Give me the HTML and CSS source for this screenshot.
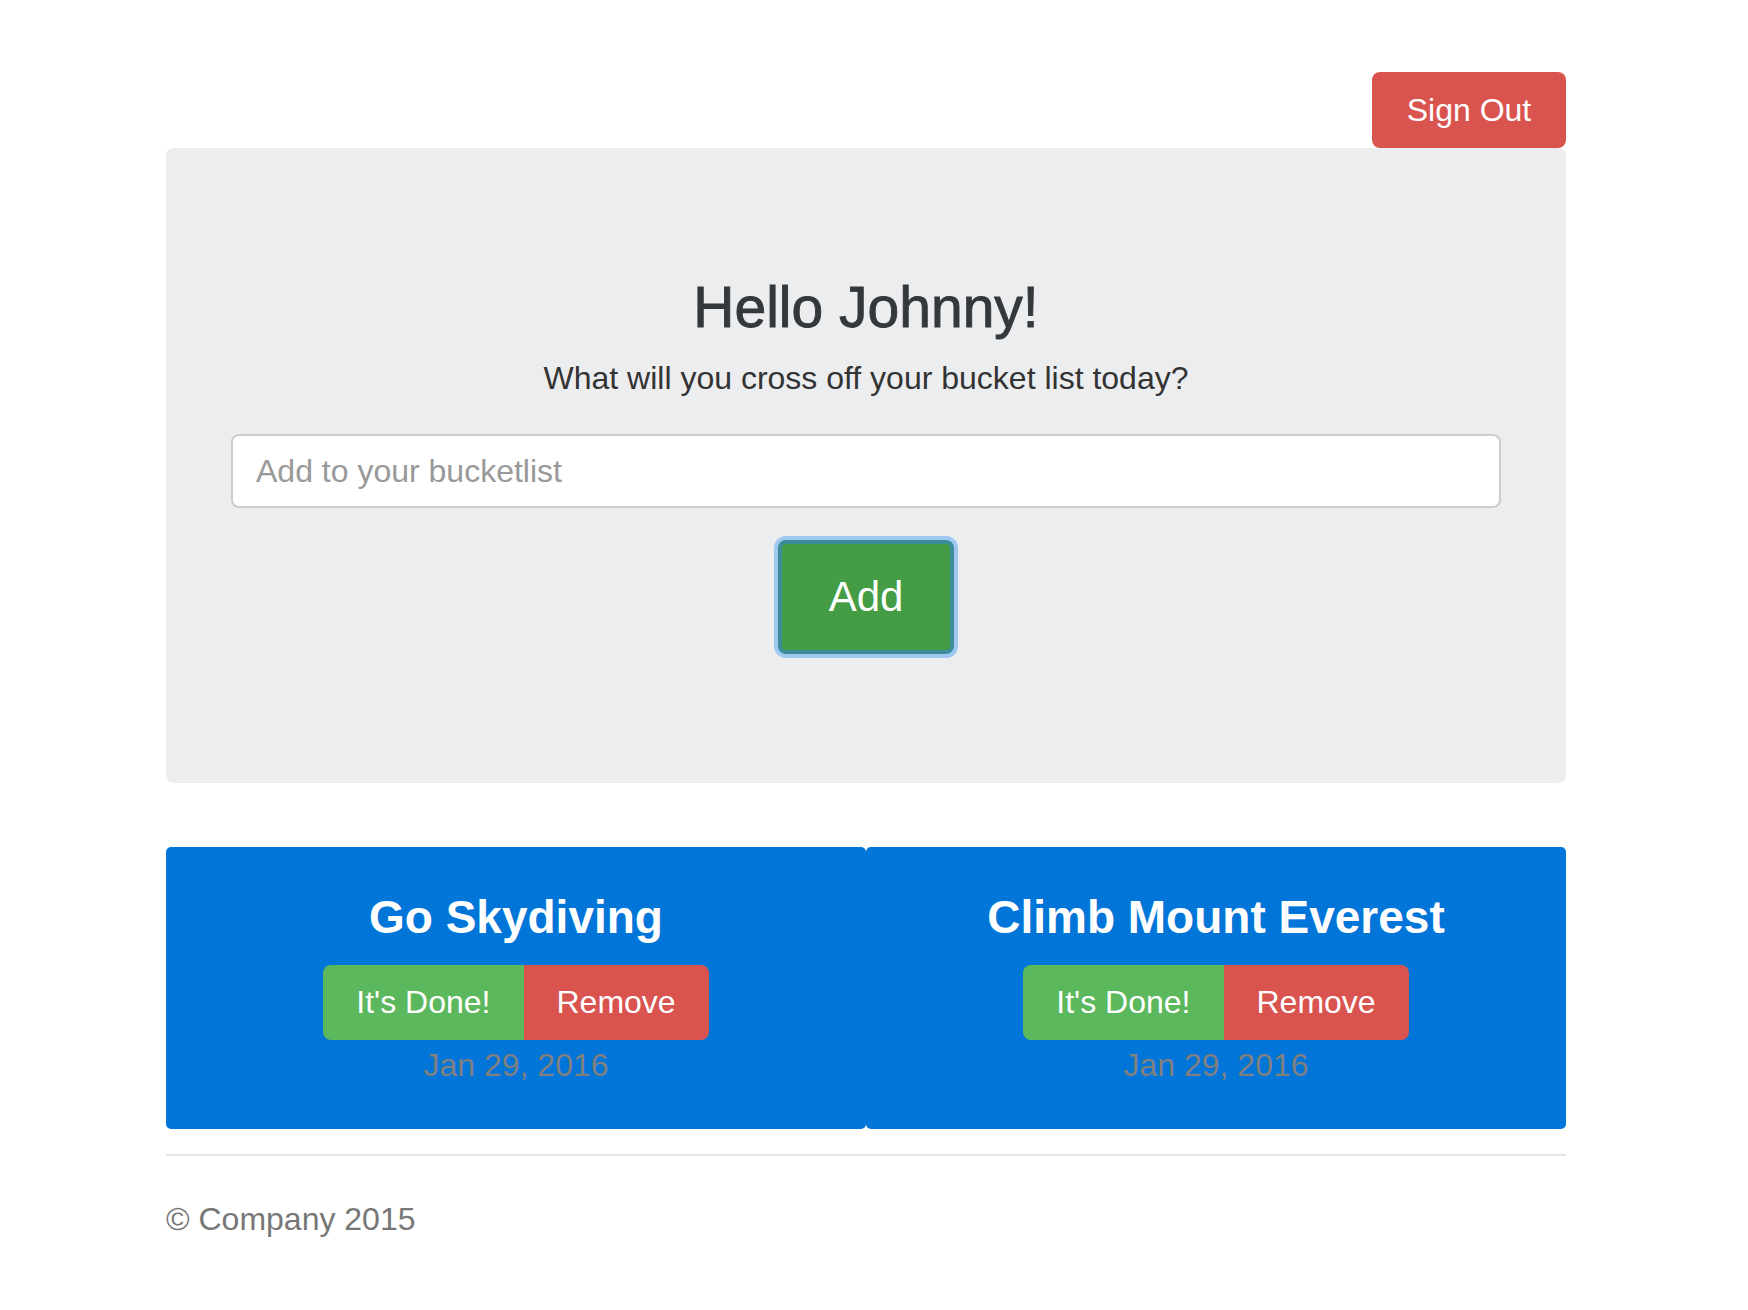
FILE: index.html
```html
<!DOCTYPE html>
<html lang="en">
<head>
<meta charset="utf-8">
<title>Bucket List</title>
<link rel="stylesheet" href="styles.css">
</head>
<body>
<div class="container">
  <header class="top-bar">
    <button class="btn btn-danger btn-signout">Sign Out</button>
  </header>

  <section class="jumbotron">
    <h1 class="jumbo-title">Hello Johnny!</h1>
    <p class="jumbo-lead">What will you cross off your bucket list today?</p>
    <input class="bucket-input" type="text" placeholder="Add to your bucketlist">
    <button class="btn btn-add">Add</button>
  </section>

  <section class="cards">
    <div class="card">
      <h2 class="card-title">Go Skydiving</h2>
      <div class="btn-group">
        <button class="btn btn-success btn-group-item">It's Done!</button>
        <button class="btn btn-danger btn-group-item">Remove</button>
      </div>
      <div class="card-date">Jan 29, 2016</div>
    </div>
    <div class="card">
      <h2 class="card-title">Climb Mount Everest</h2>
      <div class="btn-group">
        <button class="btn btn-success btn-group-item">It's Done!</button>
        <button class="btn btn-danger btn-group-item">Remove</button>
      </div>
      <div class="card-date">Jan 29, 2016</div>
    </div>
  </section>

  <footer class="footer">
    <p class="footer-text">&copy; Company 2015</p>
  </footer>
</div>
</body>
</html>
```

FILE: styles.css
```css
* {
  box-sizing: border-box;
}

html, body {
  margin: 0;
  background: #ffffff;
}

body {
  padding-right: 16px;
  font-family: "Liberation Sans", Arial, sans-serif;
  color: #333333;
}

.container {
  width: 1400px;
  margin: 0 auto;
}

.top-bar {
  display: flex;
  justify-content: flex-end;
  padding-top: 72px;
}

.btn {
  font-family: "Liberation Sans", Arial, sans-serif;
  border: none;
  color: #ffffff;
  cursor: pointer;
  display: inline-flex;
  align-items: center;
  justify-content: center;
}

.btn-danger {
  background: #d9534f;
}

.btn-success {
  background: #5cb85c;
}

.btn-signout {
  width: 194px;
  height: 76px;
  font-size: 32px;
  border-radius: 8px;
  padding: 0;
}

.jumbotron {
  background: #ecedef;
  border-radius: 8px;
  padding: 128px 65px 129px;
  display: flex;
  flex-direction: column;
  align-items: center;
}

.jumbo-title {
  margin: 0 0 19px;
  font-size: 57px;
  line-height: 63px;
  font-weight: 400;
  -webkit-text-stroke: 0.9px #35383b;
  color: #35383b;
}

.jumbo-lead {
  margin: 0 0 36px;
  font-size: 32px;
  line-height: 40px;
  color: #333333;
}

.bucket-input {
  width: 100%;
  height: 74px;
  border: 2px solid #cccccc;
  border-radius: 8px;
  background: #ffffff;
  padding: 0 23px;
  font-family: "Liberation Sans", Arial, sans-serif;
  font-size: 32px;
  color: #555555;
  margin: 0 0 32px;
  outline: none;
}

.bucket-input::placeholder {
  color: #999999;
}

.btn-add {
  width: 176px;
  height: 114px;
  background: #449d44;
  border: 4px solid #3d8c99;
  border-radius: 8px;
  box-shadow: 0 0 0 4px #9ec7f2;
  font-size: 42px;
  padding: 0;
}

.cards {
  margin-top: 64px;
  display: grid;
  grid-template-columns: 1fr 1fr;
}

.card {
  background: #0275d8;
  border-radius: 5px;
  padding: 44px 20px 44px;
  display: flex;
  flex-direction: column;
  align-items: center;
}

.card-title {
  margin: 0 0 22px;
  font-size: 46px;
  line-height: 52px;
  font-weight: 700;
  color: #ffffff;
}

.btn-group {
  display: flex;
}

.btn-group-item {
  height: 75px;
  padding: 0 33px;
  font-size: 32px;
}

.btn-group-item:first-child {
  border-radius: 8px 0 0 8px;
}

.btn-group-item:last-child {
  border-radius: 0 8px 8px 0;
}

.card-date {
  margin-top: 5px;
  font-size: 32px;
  line-height: 40px;
  color: #808080;
}

.footer {
  margin-top: 25px;
  border-top: 2px solid #e5e5e5;
  padding-top: 41px;
}

.footer-text {
  margin: 0;
  font-size: 32px;
  line-height: 44px;
  color: #777777;
}
```
